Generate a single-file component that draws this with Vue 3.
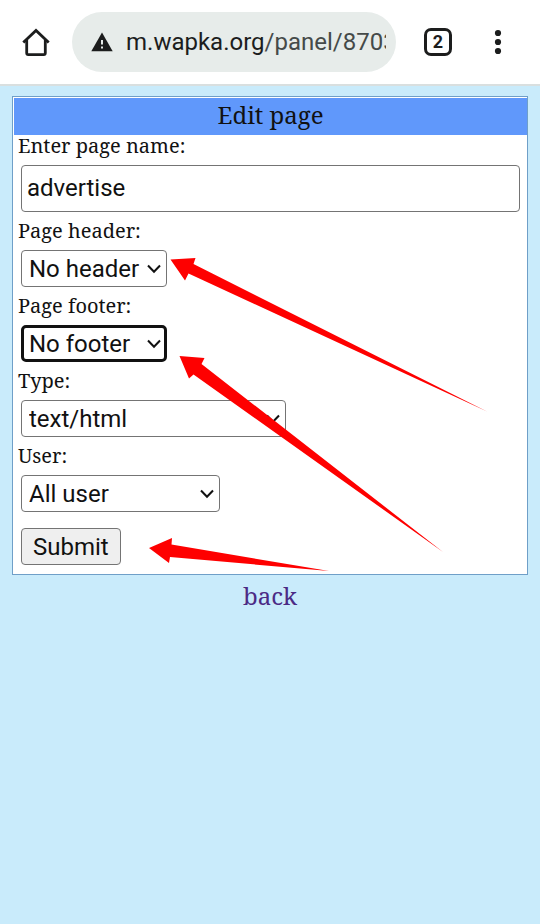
<script setup>
import { ref } from 'vue'

const pageName = ref('advertise')
const selects = ref([
  { id: 'header', label: 'Page header:', value: 'No header', size: 'small' },
  { id: 'footer', label: 'Page footer:', value: 'No footer', size: 'small', active: true },
  { id: 'type', label: 'Type:', value: 'text/html', size: 'large' },
  { id: 'user', label: 'User:', value: 'All user', size: 'medium' },
])
</script>

<template>
  <div class="screen">
    <header class="toolbar">
      <button class="icon-button home" type="button" aria-label="Home">
        <svg width="28" height="28" viewBox="0 0 28 28" fill="none" stroke="#1c1d1d" stroke-width="2.8">
          <path d="M1.3 14.6 14 2.4l12.7 12.2" />
          <path d="M4.7 12v13q0 1.6 1.6 1.6h15.4q1.6 0 1.6-1.6V12" />
        </svg>
      </button>
      <button class="address" type="button">
        <svg class="warning" width="22" height="20" viewBox="0 0 22 20">
          <path d="M11 0.6 21.7 19.2H0.3z" fill="#1c1d1d" />
          <path d="M10 8h2v4.6h-2zM10 14.4h2v2.2h-2z" fill="#e7ecea" />
        </svg>
        <span class="url"><span class="host">m.wapka.org</span>/panel/8703</span>
      </button>
      <button class="icon-button tabs" type="button" aria-label="Open tabs">2</button>
      <button class="icon-button more" type="button" aria-label="Menu">
        <svg width="8" height="26" viewBox="0 0 8 26" fill="#1c1d1d">
          <circle cx="4" cy="4" r="3.1" />
          <circle cx="4" cy="13" r="3.1" />
          <circle cx="4" cy="22" r="3.1" />
        </svg>
      </button>
    </header>

    <main class="content">
      <section class="panel">
        <h1 class="title">Edit page</h1>
        <form class="form" @submit.prevent>
          <div class="field">
            <label for="name">Enter page name:</label>
            <input id="name" v-model="pageName" class="control text" type="text" />
          </div>
          <div v-for="s in selects" :key="s.id" class="field">
            <label :for="s.id">{{ s.label }}</label>
            <div class="select-box" :class="s.size">
              <select :id="s.id" v-model="s.value" class="control" :class="{ active: s.active }">
                <option>{{ s.value }}</option>
              </select>
              <svg class="chevron" width="14" height="10" viewBox="0 0 14 10" fill="none" stroke="#111" stroke-width="2">
                <path d="M1 1.5 7 7.8 13 1.5" />
              </svg>
            </div>
          </div>
          <button class="submit" type="submit">Submit</button>
        </form>
      </section>
      <a class="back" href="#">back</a>

      <svg class="arrows" width="540" height="500" viewBox="0 86 540 500" fill="#fe0000" aria-hidden="true">
        <path d="M170.500 259.500 195.500 258 193.500 264 487 411.500 188.500 273.500 185 280.500z" />
        <path d="M179.500 356 204.500 358 201.500 364 443 552 193.500 374.500 189 378.500z" />
        <path d="M149 548 172 538 171.500 544.500 329 571 170 557 169 563z" />
      </svg>
    </main>
  </div>
</template>

<style>
body {
  background: #c9ebfb;
}
</style>

<style scoped>
.screen {
  min-height: 100vh;
  background: #c9ebfb;
  color: #111;
  font-family: "Noto Serif", "DejaVu Serif Condensed", "DejaVu Serif", serif;
}

.screen * {
  box-sizing: border-box;
}

.toolbar {
  display: flex;
  align-items: center;
  height: 86px;
  padding: 0 20px;
  border-bottom: 2px solid #d9dfdf;
  background: #fff;
}

.icon-button {
  display: flex;
  flex: none;
  align-items: center;
  justify-content: center;
  padding: 0;
  border: 0;
  background: none;
}

.home {
  width: 32px;
  height: 32px;
  margin-right: 20px;
}

.address {
  display: flex;
  flex: 1;
  align-items: center;
  min-width: 0;
  height: 60px;
  padding: 0 10px 0 19px;
  border: 0;
  border-radius: 30px;
  background: #e7ecea;
  text-align: left;
}

.warning {
  flex: none;
  margin-right: 13px;
}

.url {
  flex: 1;
  min-width: 0;
  overflow: hidden;
  color: #454a49;
  font: 24px/32px Roboto, sans-serif;
  white-space: nowrap;
}

.host {
  color: #1c1d1d;
}

.tabs {
  width: 28px;
  height: 28px;
  margin: 0 30px 0 28px;
  border: 3px solid #1c1d1d;
  border-radius: 7px;
  color: #1c1d1d;
  font: 700 18px/20px Roboto, sans-serif;
}

.more {
  width: 32px;
  height: 32px;
  margin-right: 6px;
}

.content {
  position: relative;
  padding: 10px 12px;
}

.panel {
  padding: 1px 0 9px 1px;
  border: 1px solid #6f9fc8;
  background: #fff;
}

.title {
  margin: 0;
  padding-bottom: 3px;
  background: #6098fb;
  font-size: 24px;
  font-weight: 400;
  line-height: 34px;
  text-align: center;
}

.form {
  display: flex;
  flex-direction: column;
  align-items: flex-start;
  gap: 8px;
  padding: 0 7px;
}

.field {
  width: 100%;
}

label {
  display: block;
  margin: 0 0 8px -3px;
  font-size: 20px;
  line-height: 22px;
}

.control {
  display: block;
  width: 100%;
  height: 37px;
  margin: 0;
  padding: 0 7px;
  border: 1px solid #747474;
  border-radius: 4px;
  outline: 0;
  appearance: none;
  background: #fff;
  color: #111;
  font: 24px/32px Roboto, sans-serif;
}

.text {
  height: 47px;
  padding: 0 5px 2px;
}

.active {
  padding: 0 5px;
  border: 3px solid #111;
  border-radius: 5px;
}

.select-box {
  position: relative;
}

.small {
  width: 146px;
}

.medium {
  width: 199px;
}

.large {
  width: 265px;
}

.chevron {
  position: absolute;
  top: 14px;
  right: 6px;
  pointer-events: none;
}

.submit {
  height: 37px;
  margin-top: 8px;
  padding: 0 11px;
  border: 1px solid #747474;
  border-radius: 4px;
  background: #efefef;
  color: #111;
  font: 24px/32px Roboto, sans-serif;
}

.back {
  display: block;
  width: fit-content;
  margin: 3px auto 0;
  color: #4b2a85;
  font-size: 24px;
  line-height: 36px;
  text-decoration: none;
}

.arrows {
  position: absolute;
  top: 0;
  left: 0;
  pointer-events: none;
}
</style>
